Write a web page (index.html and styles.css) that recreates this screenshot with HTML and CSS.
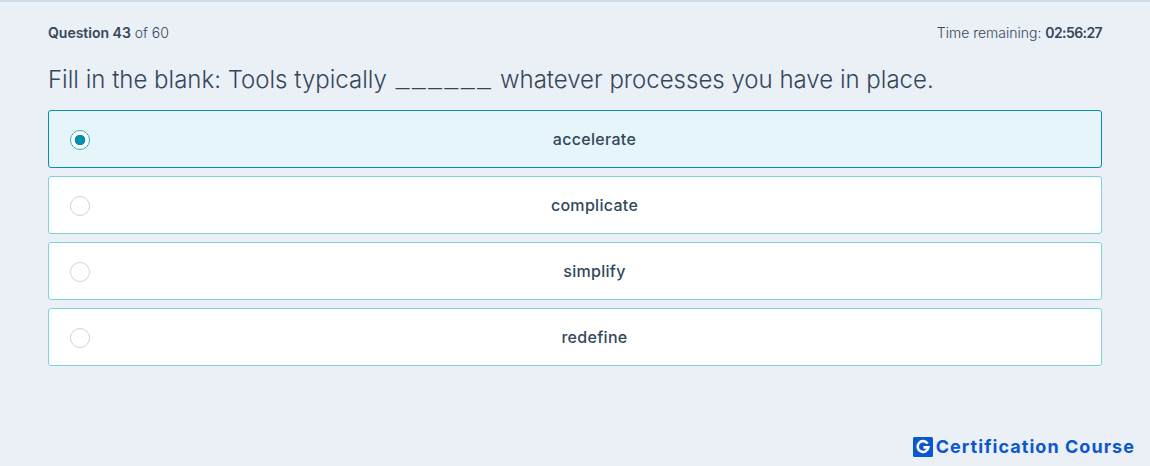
FILE: index.html
```html
<!DOCTYPE html>
<html lang="en">
<head>
  <meta charset="UTF-8" />
  <title>Certification Exam</title>
  <link rel="stylesheet" href="styles.css">
</head>
<body>
  <div class="exam">
    <div class="status">
      <div class="progress"><b>Question 43</b> of 60</div>
      <div class="timer">Time remaining: <b>02:56:27</b></div>
    </div>

    <h1 class="question">Fill in the blank: Tools typically <span class="blank">______</span> whatever processes you have in place.</h1>

    <div class="answers">
      <label class="answer selected"><span class="radio"></span><span class="answerText">accelerate</span></label>
      <label class="answer"><span class="radio"></span><span class="answerText">complicate</span></label>
      <label class="answer"><span class="radio"></span><span class="answerText">simplify</span></label>
      <label class="answer"><span class="radio"></span><span class="answerText">redefine</span></label>
    </div>
  </div>

  <!-- Logo bottom right -->
  <div class="brand">
    <svg class="brandMark" viewBox="0 0 20 20" width="20" height="20">
      <rect width="20" height="20" rx="1.5" fill="#0b57d0"/>
      <path d="M14.6 6.6A5.4 5.4 0 1 0 15.4 10.4H10.4" fill="none" stroke="#fff" stroke-width="2.6"/>
    </svg>
    <span class="brandName">Certification Course</span>
  </div>
</body>
</html>
```

FILE: styles.css
```css
/* Basic Reset */
* {
  margin: 0;
  padding: 0;
  box-sizing: border-box;
}

body {
  position: relative;
  height: 466px;
  overflow: hidden;
  background-color: #ebeff6;
  border-top: 2px solid #cddceb;
  font-family: "Inter", "Open Sans", sans-serif;
  color: #33475b;
}

.exam {
  padding: 20px 48px 0;
}

/* TOP ROW */
.status {
  display: flex;
  justify-content: space-between;
  align-items: center;
  height: 20px;
  font-size: 14px;
  font-weight: 300;
}

.status b {
  font-weight: 600;
}

.timer b {
  letter-spacing: -0.6px;
}

/* QUESTION */
.question {
  margin-top: 22px;
  margin-bottom: 14px;
  font-size: 24px;
  line-height: 32px;
  font-weight: 300;
}

/* six wide underscores, the gaps between them are visible */
.blank {
  margin-left: 2px;
  font-size: 32px;
  line-height: 0;
  font-weight: 200;
  letter-spacing: 2.2px;
}

/* ANSWER LIST */
.answers {
  display: flex;
  flex-direction: column;
  gap: 8px;
}

.answer {
  display: flex;
  align-items: center;
  height: 58px;
  padding-left: 21px;
  background-color: #fff;
  border: 1px solid #7fd1de;
  border-radius: 3px;
  cursor: pointer;
}

.answer.selected {
  background-color: #e5f5fa;
  border-color: #0091ae;
}

.radio {
  flex: none;
  width: 20px;
  height: 20px;
  margin-top: 1px;
  background-color: #fff;
  border: 1px solid #cbd6e2;
  border-radius: 50%;
}

.selected .radio {
  border: 1.5px solid #3fa9c1;
  background: radial-gradient(circle, #0091ae 0, #0091ae 5px, #fff 5.6px);
}

.answerText {
  flex: 1;
  padding-right: 2px;
  text-align: center;
  font-size: 16px;
  font-weight: 500;
  letter-spacing: 0.3px;
}

/* LOGO */
.brand {
  position: absolute;
  right: 15px;
  bottom: 9px;
  display: flex;
  align-items: center;
  gap: 3px;
  color: #0b57d0;
}

.brandName {
  font-size: 18px;
  font-weight: 700;
  letter-spacing: 1.05px;
}
```
